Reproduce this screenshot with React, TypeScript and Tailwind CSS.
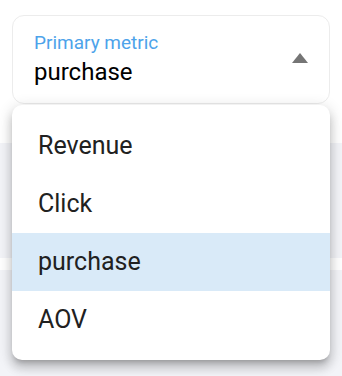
const options = ['Revenue', 'Click', 'purchase', 'AOV']

export default function App() {
  const selected = 'purchase'

  return (
    <div className="relative w-[342px] h-[376px] overflow-hidden flex flex-col bg-[#f3f4f8] font-['Roboto',sans-serif]">
      <div className="h-[143px] bg-white px-3 pt-[15px]">
        <div className="h-[89px] rounded-xl border border-[#ececec] flex items-center pl-[21px] pr-[21px]">
          <div className="flex-1 flex flex-col">
            <span className="text-[19px] leading-[22px] mb-[3px] text-[#4da3ea]">Primary metric</span>
            <span className="text-[24px] leading-[30px] text-black">{selected}</span>
          </div>
          <svg width="16" height="10" viewBox="0 0 16 10" className="mb-[4px]">
            <polygon points="8,0 16,10 0,10" fill="#757575" />
          </svg>
        </div>
      </div>
      <div className="h-[115px]" />
      <div className="h-[12px] bg-white" />
      <div className="flex-1" />

      {/* open dropdown */}
      <div className="absolute left-3 top-[105px] w-[318px] rounded-[10px] bg-white pt-3 pb-[11px] shadow-[0_5px_5px_-3px_rgba(0,0,0,0.2),0_8px_10px_1px_rgba(0,0,0,0.14),0_3px_14px_2px_rgba(0,0,0,0.12)]">
        {options.map((o) => (
          <div
            key={o}
            className={`h-[58px] flex items-center pl-[26px] text-[25px] text-[#212121] ${o === selected ? 'bg-[#d9eaf8]' : ''}`}
          >
            {o}
          </div>
        ))}
      </div>
    </div>
  )
}
